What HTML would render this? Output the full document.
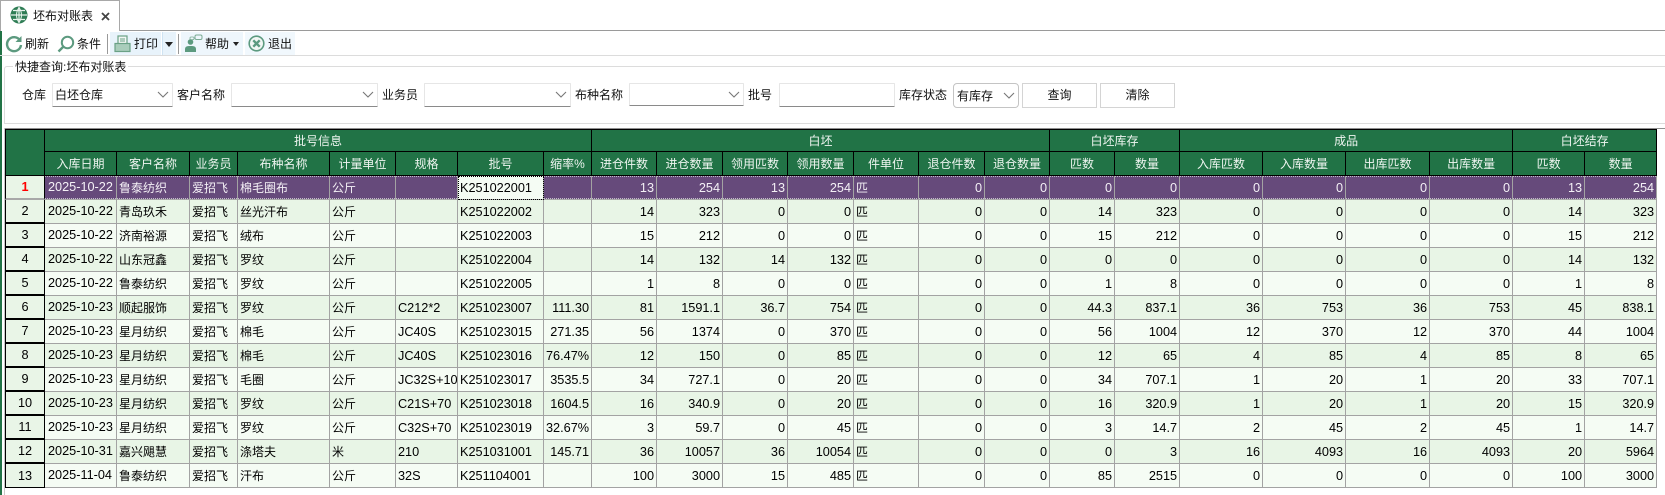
<!DOCTYPE html>
<html><head><meta charset="utf-8">
<style>
html,body{margin:0;padding:0;background:#fff}
body{width:1665px;height:495px;position:relative;overflow:hidden;font:12px "Liberation Sans","Noto Sans CJK SC",sans-serif;color:#111}
.a{position:absolute}
.t{position:absolute;white-space:nowrap;line-height:16px;font-size:12px}
.box{position:absolute;box-sizing:border-box;background:#fff;border:1px solid #e6e6e6;border-bottom:1px solid #8a8a8a;border-radius:1px}
.box svg{position:absolute;right:3px;top:7px}
.btn{position:absolute;box-sizing:border-box;border:1px solid #d4d4d4;background:#fff;text-align:center;line-height:22px;font-size:12px}
table{position:absolute;left:5px;top:129px;width:1652px;table-layout:fixed;border-collapse:separate;border-spacing:0}
td,th{box-sizing:border-box;overflow:hidden;white-space:nowrap;padding:0 2px;font-weight:normal;font-size:12px}
th{background:#217346;color:#eef5f0;border-right:1px solid #000;border-bottom:1px solid #000;text-align:center}
tr.h1 th{height:23px;border-top:1px solid #000}
tr.h2 th{height:24px}
td{height:24px;border-right:1px solid #a3a3a3;border-bottom:1px solid #a3a3a3;color:#000;line-height:22px}
td.n{text-align:right;font-size:12.7px;padding-right:2px}
td.d{font-size:12.7px;padding-left:3px;line-height:22px;vertical-align:top}
td.c{font-size:12.7px}
td.rh{text-align:center;font-size:12.7px;background:#e9f5e7;border-right:1px solid #000;border-left:1px solid #000;border-bottom:2px solid #000}
tr.o td{background:#f5fcf4}
tr.e td{background:#e8f5e6}
tr.o td.rh,tr.e td.rh{background:#e9f5e7}
tr.s td{color:#f4f0f6;border-bottom-color:#a8a8a8;background:repeating-linear-gradient(90deg,#c4bccc 0 1px,transparent 1px 2px) 0 0/100% 1px no-repeat,repeating-linear-gradient(90deg,#c4bccc 0 1px,transparent 1px 2px) 0 100%/100% 1px no-repeat,#664a7b}
tr.s td.rh{background:#e9f5e7;color:#f00;font-weight:bold}
tr.s td.k{background:#f5fcf4;color:#000;outline:1px dotted #000;outline-offset:-1px}
tr.l td{border-bottom-color:#a3a3a3}
tr.l td.rh{border-bottom:1px solid #000}
</style></head><body>
<div class="a" style="left:0;top:31px;width:2px;height:464px;background:#217346"></div>
<div class="a" style="left:119px;top:30px;width:1546px;height:1px;background:#9a9a9a"></div>
<div class="a" style="left:0;top:0;width:120px;height:31px;box-sizing:border-box;border:1px solid #a8a8a8;border-bottom:0;background:#fff"></div>
<svg class="a" style="left:10px;top:6px" width="18" height="18" viewBox="0 0 18 18"><circle cx="9" cy="9" r="8.5" fill="#2f7d55"/><path d="M9 1V17M1 9H17M3 4.5H15M3 13.5H15" stroke="#e8f3ec" stroke-width="1.2" fill="none"/><path d="M9 1.5Q4 9 9 16.5M9 1.5Q14 9 9 16.5" stroke="#e8f3ec" stroke-width="1" fill="none"/></svg>
<div class="t" style="left:33px;top:8px">坯布对账表</div>
<svg class="a" style="left:101px;top:12px" width="9" height="9" viewBox="0 0 9 9"><path d="M1 1L8 8M8 1L1 8" stroke="#444" stroke-width="1.8"/></svg>

<div class="a" style="left:0;top:55px;width:1665px;height:1px;background:#dcdcdc"></div>
<svg class="a" style="left:5px;top:35px" width="18" height="18" viewBox="0 0 18 18"><path d="M15 5.5A7 7 0 1 0 16 10" fill="none" stroke="#5c9a7f" stroke-width="2.4"/><path d="M16.5 1V7H10.5Z" fill="#5c9a7f"/></svg>
<div class="t" style="left:25px;top:36px">刷新</div>
<svg class="a" style="left:57px;top:35px" width="18" height="18" viewBox="0 0 18 18"><circle cx="10.5" cy="7.5" r="5.7" fill="none" stroke="#5c9a7f" stroke-width="2"/><path d="M6 12L1.5 16.5" stroke="#5c9a7f" stroke-width="2.4"/></svg>
<div class="t" style="left:77px;top:36px">条件</div>
<div class="a" style="left:107px;top:34px;width:1px;height:20px;background:#999"></div>
<div class="a" style="left:110px;top:32px;width:51px;height:23px;background:#e8f3fb"></div>
<div class="a" style="left:162px;top:32px;width:14px;height:23px;background:#e8f3fb;border-left:1px solid #cfe3f2;box-sizing:border-box"></div>
<svg class="a" style="left:114px;top:35px" width="17" height="18" viewBox="0 0 17 18"><rect x="4" y="1" width="9" height="8" fill="#f2f7f4" stroke="#6aa186" stroke-width="1.2"/><path d="M6 4H11M6 6H11" stroke="#6aa186"/><rect x="1" y="8.5" width="15" height="8" fill="#a9cdbb" stroke="#6aa186" stroke-width="1.2"/></svg>
<div class="t" style="left:134px;top:36px">打印</div>
<svg class="a" style="left:165px;top:42px" width="8" height="5"><path d="M0 0H8L4 5Z" fill="#222"/></svg>
<div class="a" style="left:178px;top:34px;width:1px;height:20px;background:#999"></div>
<div class="a" style="left:181px;top:32px;width:62px;height:23px;background:#eef6fc"></div>
<svg class="a" style="left:184px;top:34px" width="19" height="19" viewBox="0 0 19 19"><circle cx="6.5" cy="8" r="2.8" fill="#5c9a7f"/><path d="M1 18V15Q1 12 5 12H8Q12 12 12 15V18Z" fill="#5c9a7f"/><rect x="11" y="1" width="7" height="4.5" rx="1.5" fill="none" stroke="#7aab93"/><rect x="6" y="3" width="4" height="2.6" rx="1" fill="none" stroke="#7aab93" stroke-width=".8"/></svg>
<div class="t" style="left:205px;top:36px">帮助</div>
<svg class="a" style="left:233px;top:42px" width="6" height="4"><path d="M0 0H6L3 4Z" fill="#222"/></svg>
<div class="a" style="left:245px;top:32px;width:50px;height:23px;background:#f1f8fd"></div>
<svg class="a" style="left:248px;top:35px" width="17" height="17" viewBox="0 0 17 17"><circle cx="8.5" cy="8.5" r="7.3" fill="#f2f7f4" stroke="#5c9a7f" stroke-width="1.6"/><path d="M5.3 5.3L11.7 11.7M11.7 5.3L5.3 11.7" stroke="#5c9a7f" stroke-width="2.4"/></svg>
<div class="t" style="left:268px;top:36px">退出</div>

<div class="a" style="left:4px;top:66px;width:1661px;height:58px;box-sizing:border-box;border:1px solid #dcdcdc;border-right:0;border-top-left-radius:3px"></div>
<div class="t" style="left:13px;top:59px;background:#fff;padding:0 2px">快捷查询:坯布对账表</div>

<div class="t" style="left:22px;top:87px">仓库</div>
<div class="box" style="left:52px;top:83px;width:121px;height:24px"><span class="t" style="left:2px;top:3px">白坯仓库</span><svg width="12" height="8"><path d="M1 1L6 6L11 1" fill="none" stroke="#777" stroke-width="1.1"/></svg></div>
<div class="t" style="left:177px;top:87px">客户名称</div>
<div class="box" style="left:231px;top:83px;width:147px;height:24px"><svg width="12" height="8"><path d="M1 1L6 6L11 1" fill="none" stroke="#777" stroke-width="1.1"/></svg></div>
<div class="t" style="left:382px;top:87px">业务员</div>
<div class="box" style="left:424px;top:83px;width:147px;height:24px"><svg width="12" height="8"><path d="M1 1L6 6L11 1" fill="none" stroke="#777" stroke-width="1.1"/></svg></div>
<div class="t" style="left:575px;top:87px">布种名称</div>
<div class="box" style="left:629px;top:83px;width:115px;height:23px"><svg width="12" height="8"><path d="M1 1L6 6L11 1" fill="none" stroke="#777" stroke-width="1.1"/></svg></div>
<div class="t" style="left:748px;top:87px">批号</div>
<div class="box" style="left:779px;top:83px;width:116px;height:24px"></div>
<div class="t" style="left:899px;top:87px">库存状态</div>
<div class="box" style="left:953px;top:83px;width:66px;height:25px;border:1px solid #c4c4c4;border-radius:4px"><span class="t" style="left:3px;top:4px">有库存</span><svg width="12" height="8" style="top:8px"><path d="M1 1L6 6L11 1" fill="none" stroke="#777" stroke-width="1.1"/></svg></div>
<div class="btn" style="left:1022px;top:83px;width:75px;height:25px">查询</div>
<div class="btn" style="left:1100px;top:83px;width:75px;height:25px">清除</div>

<div class="a" style="left:4px;top:128px;width:1661px;height:1px;background:#8f8f8f"></div>
<div class="a" style="left:4px;top:128px;width:1px;height:367px;background:#c8c8c8"></div>

<table>
<colgroup><col style="width:40px"><col style="width:72px"><col style="width:73px"><col style="width:48px"><col style="width:92px"><col style="width:66px"><col style="width:62px"><col style="width:86px"><col style="width:48px"><col style="width:65px"><col style="width:66px"><col style="width:65px"><col style="width:66px"><col style="width:65px"><col style="width:66px"><col style="width:65px"><col style="width:65px"><col style="width:65px"><col style="width:83px"><col style="width:83px"><col style="width:84px"><col style="width:83px"><col style="width:72px"><col style="width:72px"></colgroup>
<tr class="h1"><th rowspan="2" style="border-left:1px solid #000;height:47px"></th><th colspan="8">批号信息</th><th colspan="7">白坯</th><th colspan="2">白坯库存</th><th colspan="4">成品</th><th colspan="2">白坯结存</th></tr>
<tr class="h2"><th>入库日期</th><th>客户名称</th><th>业务员</th><th>布种名称</th><th>计量单位</th><th>规格</th><th>批号</th><th>缩率%</th><th>进仓件数</th><th>进仓数量</th><th>领用匹数</th><th>领用数量</th><th>件单位</th><th>退仓件数</th><th>退仓数量</th><th>匹数</th><th>数量</th><th>入库匹数</th><th>入库数量</th><th>出库匹数</th><th>出库数量</th><th>匹数</th><th>数量</th></tr>
<tr class="s"><td class="rh">1</td><td class="d">2025-10-22</td><td>鲁泰纺织</td><td>爱招飞</td><td>棉毛圈布</td><td>公斤</td><td class="c"></td><td class="c k">K251022001</td><td class="n"></td><td class="n">13</td><td class="n">254</td><td class="n">13</td><td class="n">254</td><td>匹</td><td class="n">0</td><td class="n">0</td><td class="n">0</td><td class="n">0</td><td class="n">0</td><td class="n">0</td><td class="n">0</td><td class="n">0</td><td class="n">13</td><td class="n">254</td></tr>
<tr class="e"><td class="rh">2</td><td class="d">2025-10-22</td><td>青岛玖禾</td><td>爱招飞</td><td>丝光汗布</td><td>公斤</td><td class="c"></td><td class="c">K251022002</td><td class="n"></td><td class="n">14</td><td class="n">323</td><td class="n">0</td><td class="n">0</td><td>匹</td><td class="n">0</td><td class="n">0</td><td class="n">14</td><td class="n">323</td><td class="n">0</td><td class="n">0</td><td class="n">0</td><td class="n">0</td><td class="n">14</td><td class="n">323</td></tr>
<tr class="o"><td class="rh">3</td><td class="d">2025-10-22</td><td>济南裕源</td><td>爱招飞</td><td>绒布</td><td>公斤</td><td class="c"></td><td class="c">K251022003</td><td class="n"></td><td class="n">15</td><td class="n">212</td><td class="n">0</td><td class="n">0</td><td>匹</td><td class="n">0</td><td class="n">0</td><td class="n">15</td><td class="n">212</td><td class="n">0</td><td class="n">0</td><td class="n">0</td><td class="n">0</td><td class="n">15</td><td class="n">212</td></tr>
<tr class="e"><td class="rh">4</td><td class="d">2025-10-22</td><td>山东冠鑫</td><td>爱招飞</td><td>罗纹</td><td>公斤</td><td class="c"></td><td class="c">K251022004</td><td class="n"></td><td class="n">14</td><td class="n">132</td><td class="n">14</td><td class="n">132</td><td>匹</td><td class="n">0</td><td class="n">0</td><td class="n">0</td><td class="n">0</td><td class="n">0</td><td class="n">0</td><td class="n">0</td><td class="n">0</td><td class="n">14</td><td class="n">132</td></tr>
<tr class="o"><td class="rh">5</td><td class="d">2025-10-22</td><td>鲁泰纺织</td><td>爱招飞</td><td>罗纹</td><td>公斤</td><td class="c"></td><td class="c">K251022005</td><td class="n"></td><td class="n">1</td><td class="n">8</td><td class="n">0</td><td class="n">0</td><td>匹</td><td class="n">0</td><td class="n">0</td><td class="n">1</td><td class="n">8</td><td class="n">0</td><td class="n">0</td><td class="n">0</td><td class="n">0</td><td class="n">1</td><td class="n">8</td></tr>
<tr class="e"><td class="rh">6</td><td class="d">2025-10-23</td><td>顺起服饰</td><td>爱招飞</td><td>罗纹</td><td>公斤</td><td class="c">C212*2</td><td class="c">K251023007</td><td class="n">111.30</td><td class="n">81</td><td class="n">1591.1</td><td class="n">36.7</td><td class="n">754</td><td>匹</td><td class="n">0</td><td class="n">0</td><td class="n">44.3</td><td class="n">837.1</td><td class="n">36</td><td class="n">753</td><td class="n">36</td><td class="n">753</td><td class="n">45</td><td class="n">838.1</td></tr>
<tr class="o"><td class="rh">7</td><td class="d">2025-10-23</td><td>星月纺织</td><td>爱招飞</td><td>棉毛</td><td>公斤</td><td class="c">JC40S</td><td class="c">K251023015</td><td class="n">271.35</td><td class="n">56</td><td class="n">1374</td><td class="n">0</td><td class="n">370</td><td>匹</td><td class="n">0</td><td class="n">0</td><td class="n">56</td><td class="n">1004</td><td class="n">12</td><td class="n">370</td><td class="n">12</td><td class="n">370</td><td class="n">44</td><td class="n">1004</td></tr>
<tr class="e"><td class="rh">8</td><td class="d">2025-10-23</td><td>星月纺织</td><td>爱招飞</td><td>棉毛</td><td>公斤</td><td class="c">JC40S</td><td class="c">K251023016</td><td class="n">76.47%</td><td class="n">12</td><td class="n">150</td><td class="n">0</td><td class="n">85</td><td>匹</td><td class="n">0</td><td class="n">0</td><td class="n">12</td><td class="n">65</td><td class="n">4</td><td class="n">85</td><td class="n">4</td><td class="n">85</td><td class="n">8</td><td class="n">65</td></tr>
<tr class="o"><td class="rh">9</td><td class="d">2025-10-23</td><td>星月纺织</td><td>爱招飞</td><td>毛圈</td><td>公斤</td><td class="c">JC32S+10</td><td class="c">K251023017</td><td class="n">3535.5</td><td class="n">34</td><td class="n">727.1</td><td class="n">0</td><td class="n">20</td><td>匹</td><td class="n">0</td><td class="n">0</td><td class="n">34</td><td class="n">707.1</td><td class="n">1</td><td class="n">20</td><td class="n">1</td><td class="n">20</td><td class="n">33</td><td class="n">707.1</td></tr>
<tr class="e"><td class="rh">10</td><td class="d">2025-10-23</td><td>星月纺织</td><td>爱招飞</td><td>罗纹</td><td>公斤</td><td class="c">C21S+70</td><td class="c">K251023018</td><td class="n">1604.5</td><td class="n">16</td><td class="n">340.9</td><td class="n">0</td><td class="n">20</td><td>匹</td><td class="n">0</td><td class="n">0</td><td class="n">16</td><td class="n">320.9</td><td class="n">1</td><td class="n">20</td><td class="n">1</td><td class="n">20</td><td class="n">15</td><td class="n">320.9</td></tr>
<tr class="o"><td class="rh">11</td><td class="d">2025-10-23</td><td>星月纺织</td><td>爱招飞</td><td>罗纹</td><td>公斤</td><td class="c">C32S+70</td><td class="c">K251023019</td><td class="n">32.67%</td><td class="n">3</td><td class="n">59.7</td><td class="n">0</td><td class="n">45</td><td>匹</td><td class="n">0</td><td class="n">0</td><td class="n">3</td><td class="n">14.7</td><td class="n">2</td><td class="n">45</td><td class="n">2</td><td class="n">45</td><td class="n">1</td><td class="n">14.7</td></tr>
<tr class="e"><td class="rh">12</td><td class="d">2025-10-31</td><td>嘉兴飓慧</td><td>爱招飞</td><td>涤塔夫</td><td>米</td><td class="c">210</td><td class="c">K251031001</td><td class="n">145.71</td><td class="n">36</td><td class="n">10057</td><td class="n">36</td><td class="n">10054</td><td>匹</td><td class="n">0</td><td class="n">0</td><td class="n">0</td><td class="n">3</td><td class="n">16</td><td class="n">4093</td><td class="n">16</td><td class="n">4093</td><td class="n">20</td><td class="n">5964</td></tr>
<tr class="o l"><td class="rh">13</td><td class="d">2025-11-04</td><td>鲁泰纺织</td><td>爱招飞</td><td>汗布</td><td>公斤</td><td class="c">32S</td><td class="c">K251104001</td><td class="n"></td><td class="n">100</td><td class="n">3000</td><td class="n">15</td><td class="n">485</td><td>匹</td><td class="n">0</td><td class="n">0</td><td class="n">85</td><td class="n">2515</td><td class="n">0</td><td class="n">0</td><td class="n">0</td><td class="n">0</td><td class="n">100</td><td class="n">3000</td></tr>
</table>
</body></html>
